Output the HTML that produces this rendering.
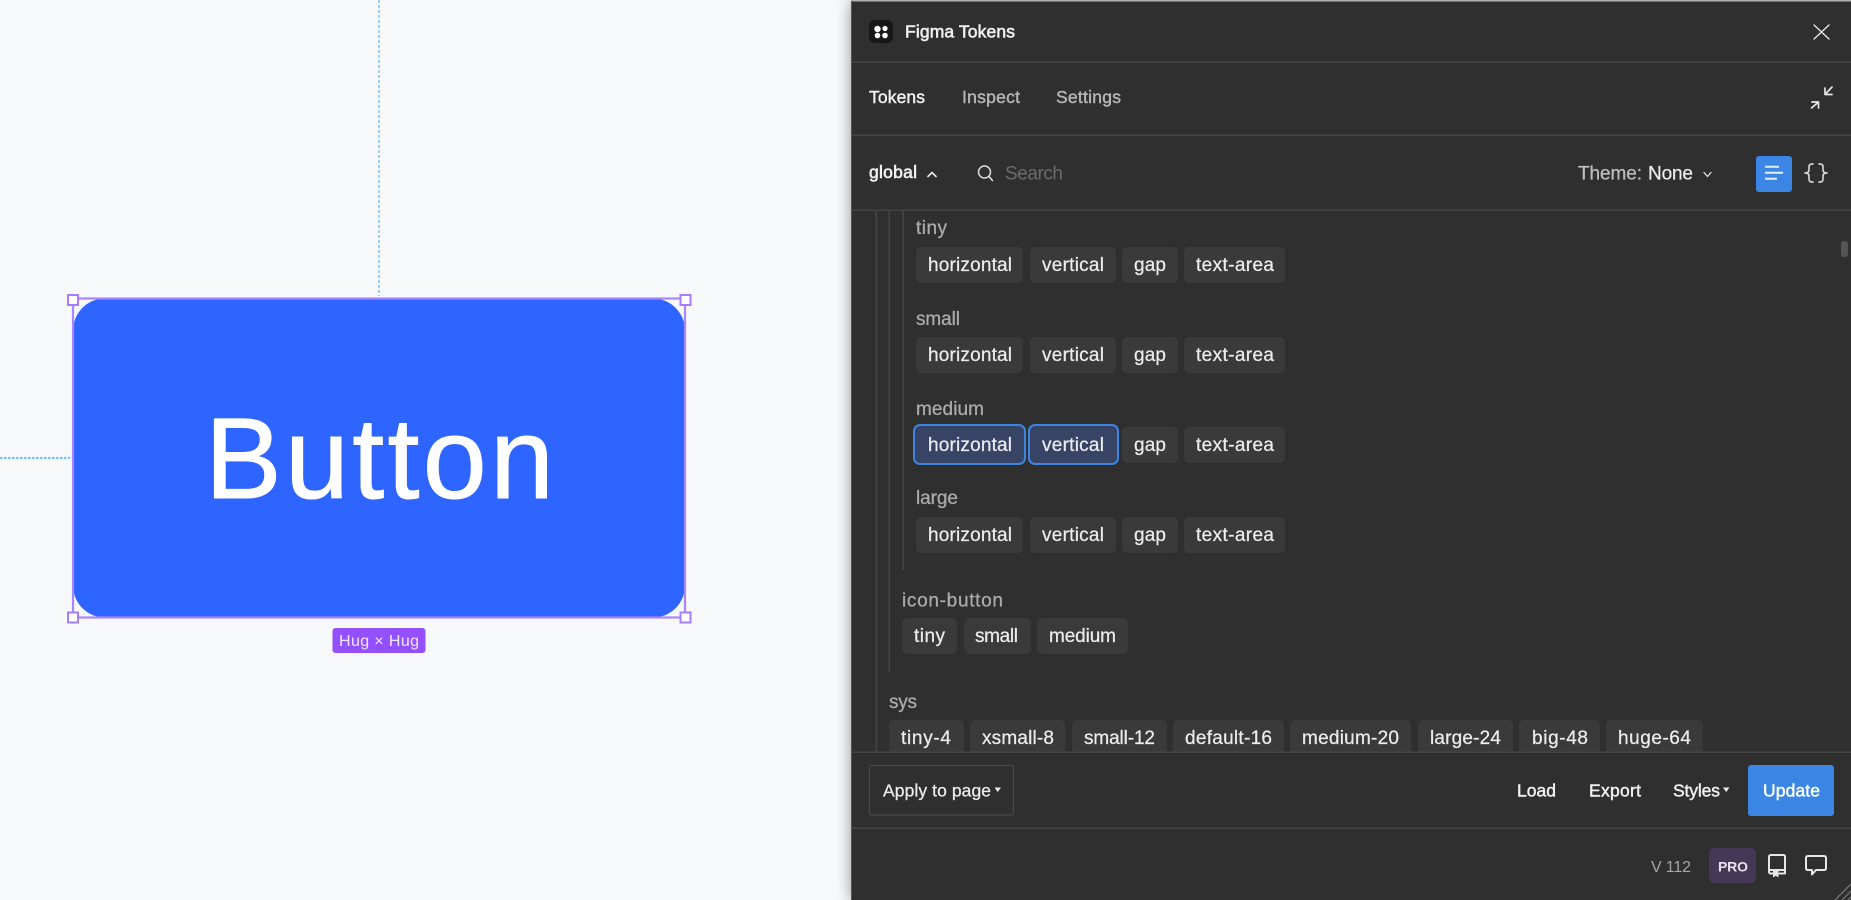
<!DOCTYPE html>
<html lang="en"><head><meta charset="utf-8"><title>Figma Tokens</title>
<style>
html,body{margin:0;padding:0;width:1851px;height:900px;overflow:hidden;background:#f7f8fa}
#shadow{position:absolute;left:851px;top:1px;width:1000px;height:899px;box-shadow:0 0 14px rgba(0,0,0,.4)}
svg{position:absolute;left:0;top:0;display:block;filter:blur(.35px)}
text{font-family:"Liberation Sans",sans-serif}
.t{font-size:19px;fill:#ececec;stroke:#ececec;stroke-width:.25px}
.l{font-size:19px;fill:#ababab;stroke:#ababab;stroke-width:.3px}
.b{font-size:17.5px;fill:#f0f0f0;stroke:#f0f0f0;stroke-width:.45px}
.p{fill:#3a3a3a}
.i{fill:none;stroke:#e6e6e6;stroke-width:1.7;stroke-linecap:round;stroke-linejoin:round}
</style></head><body>
<div id="shadow"></div>
<svg width="1851" height="900" viewBox="0 0 1851 900" xmlns="http://www.w3.org/2000/svg">
<!-- canvas -->
<line x1="379" y1="0" x2="379" y2="296" stroke="#7cc0f5" stroke-width="1.5" stroke-dasharray="3 2"/>
<line x1="0" y1="458" x2="70" y2="458" stroke="#7cc0f5" stroke-width="2.2" stroke-dasharray="2.5 1.500"/>
<rect x="73" y="298.500" width="612" height="319" rx="32" fill="#2e64ff"/>
<rect x="73" y="298.500" width="612" height="319" fill="none" stroke="#a985ff" stroke-width="2.2"/>
<g fill="#fff" stroke="#a77dff" stroke-width="2">
<rect x="68" y="295" width="10" height="10"/><rect x="680.500" y="295" width="10" height="10"/>
<rect x="68" y="612.500" width="10" height="10"/><rect x="680.500" y="612.500" width="10" height="10"/>
</g>
<text x="205" y="498" font-size="115" fill="#fff" stroke="#fff" stroke-width="1" textLength="349" lengthAdjust="spacing">Button</text>
<rect x="332.500" y="628" width="93" height="25" rx="3" fill="#9450ff"/>
<text x="339" y="646" font-size="16" fill="#f1e8ff" textLength="80">Hug × Hug</text>

<!-- panel -->
<rect x="851" y="1" width="1000" height="899" fill="#2f2f2f"/>
<rect x="851" y="0" width="1000" height="1.500" fill="#b0b0b0"/>
<rect x="851" y="1" width="1" height="899" fill="#565656"/>
<g fill="#444"><rect x="852" y="61.500" width="999" height="1.500"/><rect x="852" y="134.500" width="999" height="1.500"/><rect x="852" y="209.500" width="999" height="1.500"/></g>

<!-- title -->
<rect x="869" y="20" width="24" height="23" rx="6" fill="#171717"/>
<g fill="#fff"><circle cx="877.500" cy="29" r="3.200"/><circle cx="885" cy="28.500" r="2.600"/><circle cx="877.500" cy="35.500" r="2.800"/><circle cx="885" cy="35.500" r="2.800"/></g>
<text class="b" x="905" y="37.500" textLength="110" style="stroke-width:.6px">Figma Tokens</text>
<path class="i" style="stroke-width:1.4" d="M1814 25 L1829 39 M1829 25 L1814 39"/>

<!-- tabs -->
<text class="b" x="869" y="103" textLength="56">Tokens</text>
<text class="b" x="962" y="103" textLength="58" style="fill:#b4b4b4;stroke:#b4b4b4">Inspect</text>
<text class="b" x="1056" y="103" textLength="65" style="fill:#b4b4b4;stroke:#b4b4b4">Settings</text>
<path class="i" d="M1825 88 V94.500 H1832 M1825 94.500 L1832 87 M1812 102 H1818.500 V108 M1818.500 102 L1811.500 108"/>

<!-- toolbar -->
<text class="b" x="869" y="178" textLength="48" style="stroke-width:.6px">global</text>
<path class="i" d="M928 176.500 L932 172.500 L936 176.500"/>
<circle cx="984.500" cy="172" r="6" fill="none" stroke="#ddd" stroke-width="1.500"/>
<path class="i" style="stroke-width:1.5" d="M989 176.500 L992.500 180.500"/>
<text x="1005" y="179.500" font-size="19" fill="#6b6b6b" textLength="58">Search</text>
<text class="l" x="1578" y="179.500" textLength="64" style="fill:#bdbdbd;stroke:#bdbdbd">Theme:</text>
<text class="t" x="1648" y="179.500" textLength="45">None</text>
<path class="i" style="stroke-width:1.3" d="M1704 172.500 L1707.500 176.500 L1711 172.500"/>
<rect x="1756" y="156" width="36" height="36" rx="3" fill="#3b85e4"/>
<path d="M1765 166.700 H1779 M1765 172.700 H1783 M1765 178.700 H1777" stroke="#e4effc" stroke-width="2" fill="none"/>
<path class="i" style="stroke:#d0d0d0" d="M1813 164 h-1 q-3 0 -3 3 v3 q0 3 -4 3 q4 0 4 3 v3 q0 3 3 3 h1 M1819 164 h1 q3 0 3 3 v3 q0 3 4 3 q-4 0 -4 3 v3 q0 3 -3 3 h-1"/>

<!-- tree lines -->
<g fill="#454545"><rect x="875.500" y="211" width="1.500" height="541"/><rect x="888.500" y="211" width="1.500" height="461"/><rect x="902.500" y="211" width="1.500" height="359"/></g>
<rect x="1841" y="241" width="7" height="16" rx="3" fill="#555"/>

<!-- tiny -->
<text class="l" x="916" y="234" textLength="31">tiny</text>
<g class="p"><rect x="916" y="247" width="107" height="36" rx="5"/><rect x="1030" y="247" width="86" height="36" rx="5"/><rect x="1122" y="247" width="56" height="36" rx="5"/><rect x="1184" y="247" width="101" height="36" rx="5"/></g>
<text class="t" x="928" y="271" textLength="84">horizontal</text><text class="t" x="1042" y="271" textLength="62">vertical</text><text class="t" x="1134" y="271" textLength="32">gap</text><text class="t" x="1196" y="271" textLength="78">text-area</text>

<!-- small -->
<text class="l" x="916" y="325" textLength="44">small</text>
<g class="p"><rect x="916" y="337" width="107" height="36" rx="5"/><rect x="1030" y="337" width="86" height="36" rx="5"/><rect x="1122" y="337" width="56" height="36" rx="5"/><rect x="1184" y="337" width="101" height="36" rx="5"/></g>
<text class="t" x="928" y="361" textLength="84">horizontal</text><text class="t" x="1042" y="361" textLength="62">vertical</text><text class="t" x="1134" y="361" textLength="32">gap</text><text class="t" x="1196" y="361" textLength="78">text-area</text>

<!-- medium -->
<text class="l" x="916" y="415" textLength="68">medium</text>
<rect x="914" y="425" width="111" height="39" rx="6" fill="#384466" stroke="#3b85e0" stroke-width="2"/>
<rect x="1029" y="425" width="89" height="39" rx="6" fill="#384466" stroke="#3b85e0" stroke-width="2"/>
<g class="p"><rect x="1122" y="427" width="56" height="36" rx="5"/><rect x="1184" y="427" width="101" height="36" rx="5"/></g>
<text class="t" x="928" y="451" textLength="84">horizontal</text><text class="t" x="1042" y="451" textLength="62">vertical</text><text class="t" x="1134" y="451" textLength="32">gap</text><text class="t" x="1196" y="451" textLength="78">text-area</text>

<!-- large -->
<text class="l" x="916" y="504" textLength="42">large</text>
<g class="p"><rect x="916" y="517" width="107" height="36" rx="5"/><rect x="1030" y="517" width="86" height="36" rx="5"/><rect x="1122" y="517" width="56" height="36" rx="5"/><rect x="1184" y="517" width="101" height="36" rx="5"/></g>
<text class="t" x="928" y="541" textLength="84">horizontal</text><text class="t" x="1042" y="541" textLength="62">vertical</text><text class="t" x="1134" y="541" textLength="32">gap</text><text class="t" x="1196" y="541" textLength="78">text-area</text>

<!-- icon-button -->
<text class="l" x="902" y="606.500" textLength="101">icon-button</text>
<g class="p"><rect x="902" y="618" width="55" height="36" rx="5"/><rect x="964" y="618" width="67" height="36" rx="5"/><rect x="1037" y="618" width="91" height="36" rx="5"/></g>
<text class="t" x="914" y="642" textLength="31">tiny</text><text class="t" x="975" y="642" textLength="43">small</text><text class="t" x="1049" y="642" textLength="67">medium</text>

<!-- sys -->
<text class="l" x="889" y="708" textLength="28">sys</text>
<g class="p"><rect x="889" y="720" width="75" height="42" rx="5"/><rect x="970" y="720" width="95" height="42" rx="5"/><rect x="1072" y="720" width="95" height="42" rx="5"/><rect x="1173" y="720" width="111" height="42" rx="5"/><rect x="1290" y="720" width="121" height="42" rx="5"/><rect x="1418" y="720" width="95" height="42" rx="5"/><rect x="1519" y="720" width="81" height="42" rx="5"/><rect x="1606" y="720" width="97" height="42" rx="5"/></g>
<text class="t" x="901" y="744" textLength="50">tiny-4</text><text class="t" x="982" y="744" textLength="72">xsmall-8</text><text class="t" x="1084" y="744" textLength="71">small-12</text><text class="t" x="1185" y="744" textLength="87">default-16</text><text class="t" x="1302" y="744" textLength="97">medium-20</text><text class="t" x="1430" y="744" textLength="71">large-24</text><text class="t" x="1532" y="744" textLength="56">big-48</text><text class="t" x="1618" y="744" textLength="73">huge-64</text>

<!-- footer -->
<rect x="852" y="752" width="999" height="148" fill="#2f2f2f"/>
<rect x="852" y="751.500" width="999" height="1.500" fill="#444"/>
<rect x="852" y="827.500" width="999" height="1.500" fill="#444"/>
<rect x="869.500" y="765.500" width="144" height="49.500" rx="2" fill="none" stroke="#484848" stroke-width="1.200"/>
<text class="t" x="883" y="796.500" textLength="108" style="font-size:17.5px">Apply to page</text>
<path d="M994.500 787.500 H1001 L997.750 792 Z" fill="#eee"/>
<text class="b" x="1517" y="796.500" textLength="39">Load</text>
<text class="b" x="1589" y="796.500" textLength="52">Export</text>
<text class="b" x="1673" y="796.500" textLength="47">Styles</text>
<path d="M1723 787.500 H1729.500 L1726.250 792 Z" fill="#eee"/>
<rect x="1748" y="765" width="86" height="51" rx="3" fill="#3b85e4"/>
<text class="b" x="1763" y="796.500" textLength="57" style="fill:#fff;stroke:#fff">Update</text>
<text x="1651" y="872" font-size="16" fill="#a6a6a6" textLength="40" lengthAdjust="spacing">V 112</text>
<rect x="1709" y="848" width="47" height="35" rx="5" fill="#453857"/>
<text x="1718" y="871.500" font-size="14" font-weight="700" fill="#e8e0f0" textLength="30">PRO</text>
<path class="i" style="stroke-width:2" d="M1769 870 V857 q0 -2 2 -2 h12.500 q1.500 0 1.500 2 V873.500 h-5.500 M1769 870 V871.500 q0 2 2 2 h1.500 M1769 870 H1785"/>
<path d="M1773 871 h5.500 v6.500 l-2.750 -1.800 l-2.750 1.800 Z" fill="#e6e6e6"/>
<path class="i" style="stroke-width:2" d="M1808 856 h16 q2 0 2 2 v10 q0 2 -2 2 h-8 l-4 4.500 v-4.500 h-4 q-2 0 -2 -2 v-10 q0 -2 2 -2 Z"/>
<path d="M1835 900 L1851 884 M1842 900 L1851 891 M1848 900 L1851 897" stroke="#7a7a7a" stroke-width="1.200"/>
</svg>
</body></html>
